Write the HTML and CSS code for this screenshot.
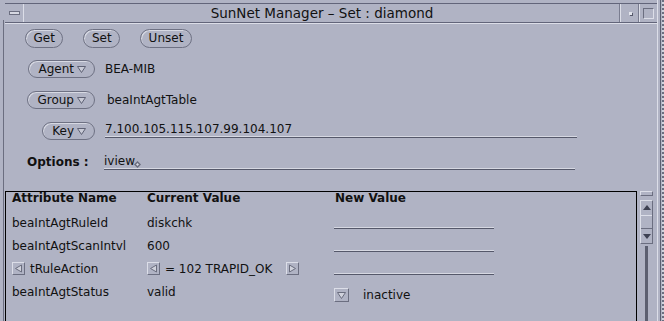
FILE: index.html
```html
<!DOCTYPE html>
<html lang="en">
<head>
  <meta charset="UTF-8" />
  <title>SunNet Manager - Set : diamond</title>
  <link rel="stylesheet" href="styles.css">
</head>
<body>
  <div class="window">
    <div class="edge-left"></div>
    <div class="main">
      <div class="titlebar">
        <div class="menu-btn"><span class="dash"></span></div>
        <div class="title">SunNet Manager – Set : diamond</div>
        <div class="tb-box tb-min"><span class="dot"></span></div>
        <div class="tb-box tb-max"><span class="sq"></span></div>
      </div>

      <div class="form">
        <div class="actions">
          <button class="pill">Get</button>
          <button class="pill">Set</button>
          <button class="pill">Unset</button>
        </div>

        <div class="field-row">
          <div class="label-col">
            <button class="pill menu">Agent <svg width="9" height="7" viewBox="0 0 9 7"><polygon points="0.5,0.5 8.5,0.5 4.5,6.5" fill="#c8cad6" stroke="#5e6174"/></svg></button>
          </div>
          <span class="value">BEA-MIB</span>
        </div>

        <div class="field-row">
          <div class="label-col">
            <button class="pill menu">Group <svg width="9" height="7" viewBox="0 0 9 7"><polygon points="0.5,0.5 8.5,0.5 4.5,6.5" fill="#c8cad6" stroke="#5e6174"/></svg></button>
          </div>
          <span class="value group-value">beaIntAgtTable</span>
        </div>

        <div class="field-row">
          <div class="label-col">
            <button class="pill menu">Key <svg width="9" height="7" viewBox="0 0 9 7"><polygon points="0.5,0.5 8.5,0.5 4.5,6.5" fill="#c8cad6" stroke="#5e6174"/></svg></button>
          </div>
          <span class="text-field key-field">7.100.105.115.107.99.104.107</span>
        </div>

        <div class="field-row options-row">
          <div class="label-col options-label">Options :</div>
          <span class="text-field options-field">iview<svg class="caret" width="7" height="7" viewBox="0 0 7 7"><polygon points="3.5,0 7,3.5 3.5,7 0,3.5" fill="#6a6d7e"/><polygon points="3.5,2 5,3.5 3.5,5 2,3.5" fill="#d6d8e2"/></svg></span>
        </div>
      </div>

      <div class="lower">
        <div class="pane">
          <div class="grid">
            <div class="head">Attribute Name</div>
            <div class="head">Current Value</div>
            <div class="head">New Value</div>

            <div class="cell">beaIntAgtRuleId</div>
            <div class="cell">diskchk</div>
            <div class="cell"><span class="input"></span></div>

            <div class="cell">beaIntAgtScanIntvl</div>
            <div class="cell">600</div>
            <div class="cell"><span class="input"></span></div>

            <div class="cell">
              <span class="arrow-btn"><svg width="9" height="9" viewBox="0 0 9 9"><polygon points="7.5,1 7.5,8 1.5,4.5" fill="#d0d2dc" stroke="#6a6d7e"/></svg></span>tRuleAction
            </div>
            <div class="cell">
              <span class="arrow-btn"><svg width="9" height="9" viewBox="0 0 9 9"><polygon points="7.5,1 7.5,8 1.5,4.5" fill="#d0d2dc" stroke="#6a6d7e"/></svg></span>= 102 TRAPID_OK<span class="arrow-btn arrow-next"><svg width="9" height="9" viewBox="0 0 9 9"><polygon points="1.5,1 1.5,8 7.5,4.5" fill="#d0d2dc" stroke="#6a6d7e"/></svg></span>
            </div>
            <div class="cell"><span class="input"></span></div>

            <div class="cell">beaIntAgtStatus</div>
            <div class="cell">valid</div>
            <div class="cell">
              <span class="choice">
                <span class="drop-btn"><svg width="9" height="7" viewBox="0 0 9 7"><polygon points="0.5,0.5 8.5,0.5 4.5,6.5" fill="#d0d2dc" stroke="#6a6d7e"/></svg></span>inactive
              </span>
            </div>
          </div>
        </div>

        <div class="scrollbar">
          <div class="anchor"></div>
          <div class="elevator">
            <div class="elev-part"><svg width="8" height="5" viewBox="0 0 8 5"><polygon points="4,0 8,5 0,5" fill="#3e4152"/></svg></div>
            <div class="elev-part elev-mid"></div>
            <div class="elev-part"><svg width="8" height="5" viewBox="0 0 8 5"><polygon points="0,0 8,0 4,5" fill="#3e4152"/></svg></div>
          </div>
          <div class="cable"></div>
        </div>
      </div>
    </div>
    <div class="edge-right"></div>
  </div>
</body>
</html>
```

FILE: styles.css
```css
body {
  margin: 0;
  background: #b0b3c4;
  font-family: "DejaVu Sans", sans-serif;
  font-size: 12px;
  color: #111;
}
.window {
  display: flex;
  width: 664px;
  height: 321px;
  overflow: hidden;
}
.edge-left {
  flex: none;
  width: 3px;
  margin-top: 20px;
  margin-right: 1px;
  border-right: 1px solid #6b6e80;
}
.main {
  flex: none;
  width: 652px;
  padding-top: 3px;
}
.edge-right {
  flex: none;
  width: 6px;
  border-left: 1px solid #dcdee8;
  background-image: linear-gradient(#5c5f70, #5c5f70), repeating-linear-gradient(to bottom, #6b6e80 0 2px, #d0d2dc 2px 4px);
  background-size: 1px 100%, 2px 100%;
  background-position: 2px 0, 4px 0;
  background-repeat: no-repeat;
}

/* title bar */
.titlebar {
  display: flex;
  height: 18px;
  border-top: 1px solid #62657a;
  border-bottom: 1px solid #62657a;
  box-shadow: 0 1px 0 #dcdee8;
}
.menu-btn {
  width: 18px;
  border-right: 1px solid #dcdee8;
  display: flex;
  align-items: center;
  justify-content: center;
}
.dash {
  width: 9px;
  height: 2px;
  background: #d6d8e2;
  border: 1px solid #6b6e80;
}
.title {
  flex: 1;
  text-align: center;
  font-size: 13.5px;
  line-height: 18px;
}
.tb-box {
  border-left: 1px solid #dcdee8;
  box-shadow: -1px 0 0 #7a7d90;
  display: flex;
  align-items: center;
  justify-content: center;
}
.tb-min {
  width: 18px;
}
.tb-max {
  width: 17px;
}
.dot {
  width: 3px;
  height: 3px;
  background: #e2e4ec;
  box-shadow: 1px 1px 0 #55586a;
}
.sq {
  width: 9px;
  height: 9px;
  border: 1px solid;
  border-color: #6b6e80 #dcdee8 #dcdee8 #6b6e80;
}

/* form */
.form {
  padding: 6px 0 0 20px;
}
.actions {
  display: flex;
  gap: 20px;
  margin-bottom: 12px;
}
.pill {
  box-sizing: border-box;
  height: 19px;
  padding: 0 7.5px;
  border: 1px solid #6e7183;
  border-radius: 10px;
  background: transparent;
  box-shadow: inset 1px 1px 0 #d7d9e3;
  font: inherit;
  color: inherit;
  line-height: 17px;
}
.pill.menu {
  height: 18px;
  padding: 0 8px 0 9px;
  display: flex;
  align-items: center;
  gap: 3px;
}
.field-row {
  display: flex;
  align-items: center;
  height: 18px;
  margin-bottom: 13px;
}
.label-col {
  flex: none;
  width: 70px;
  margin-right: 10px;
  display: flex;
  justify-content: flex-end;
}
.group-value {
  margin-left: 2px;
}
.text-field {
  align-self: flex-start;
  margin-top: 1px;
  height: 13px;
  line-height: 13px;
  border-bottom: 1px solid #55586a;
  box-shadow: inset 0 -1px 0 #d6d8e2;
  padding-bottom: 1px;
}
.key-field {
  width: 472px;
}
.options-row {
  margin-bottom: 20px;
}
.options-label {
  justify-content: flex-start;
  padding-left: 2px;
  width: 68px;
  font-weight: bold;
}
.options-field {
  width: 471px;
  margin-left: -1px;
  height: 14px;
  line-height: 15px;
}
.caret {
  vertical-align: -3px;
  margin-left: -1px;
}

/* attribute table */
.lower {
  display: flex;
}
.pane {
  width: 632px;
  height: 140px;
  border: 1px solid #000;
  border-bottom: none;
  padding-left: 6px;
  box-sizing: border-box;
}
.grid {
  display: grid;
  grid-template-columns: 135px 188px 1fr;
  grid-template-rows: 19px;
  grid-auto-rows: 23px;
}
.head {
  font-weight: bold;
  line-height: 13px;
}
.cell {
  display: flex;
  align-items: center;
}
.input {
  align-self: flex-start;
  width: 160px;
  height: 17px;
  margin-left: -1px;
  border-bottom: 1px solid #55586a;
  box-shadow: inset 0 -1px 0 #d6d8e2;
}
.arrow-btn {
  box-sizing: border-box;
  width: 13px;
  height: 13px;
  margin-right: 5px;
  border: 1px solid;
  border-color: #dcdee8 #6b6e80 #6b6e80 #dcdee8;
  display: flex;
  align-items: center;
  justify-content: center;
}
.arrow-next {
  margin: 0 0 0 14px;
}
.choice {
  align-self: flex-start;
  margin-top: 8px;
  margin-left: -1px;
  display: flex;
  align-items: center;
}
.drop-btn {
  box-sizing: border-box;
  width: 15px;
  height: 14px;
  margin-right: 14px;
  border: 1px solid;
  border-color: #dcdee8 #6b6e80 #6b6e80 #dcdee8;
  display: flex;
  align-items: center;
  justify-content: center;
}

/* scrollbar */
.scrollbar {
  width: 13px;
  margin-left: 3px;
  display: flex;
  flex-direction: column;
  align-items: center;
}
.anchor {
  box-sizing: border-box;
  width: 13px;
  height: 5px;
  border: 1px solid;
  border-color: #dcdee8 #6b6e80 #6b6e80 #dcdee8;
}
.elevator {
  box-sizing: border-box;
  width: 13px;
  height: 44px;
  margin-top: 4px;
  border: 1px solid;
  border-color: #dcdee8 #6b6e80 #6b6e80 #dcdee8;
  display: flex;
  flex-direction: column;
}
.elev-part {
  height: 14px;
  display: flex;
  align-items: center;
  justify-content: center;
}
.elev-mid {
  border-top: 1px solid #dcdee8;
  border-bottom: 1px solid #6b6e80;
  height: 13px;
}
.cable {
  width: 3px;
  flex: 1;
  height: 100px;
  margin-top: 2px;
  background: #5c5f70;
}
```
